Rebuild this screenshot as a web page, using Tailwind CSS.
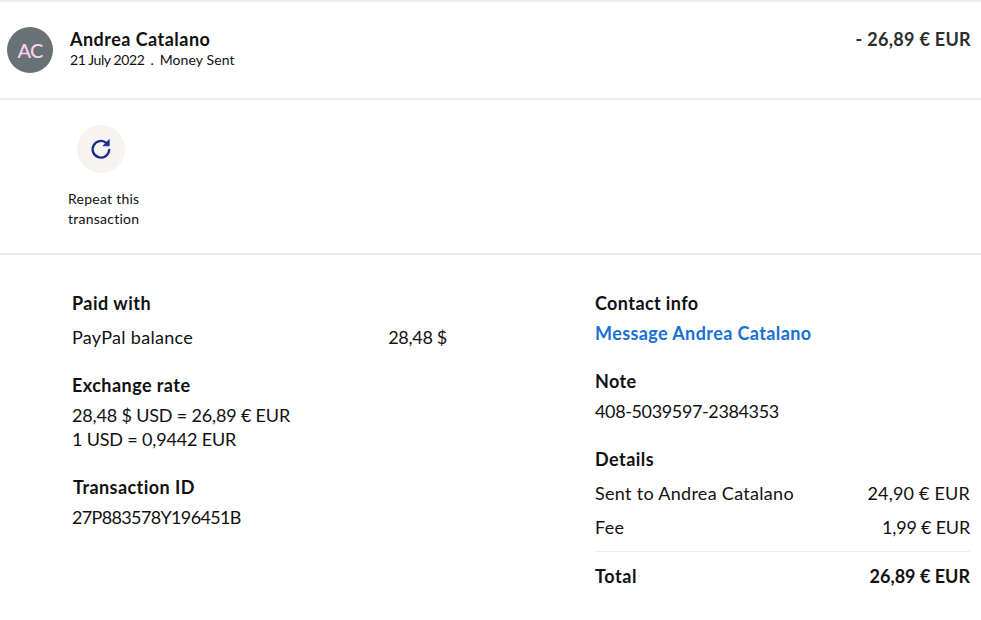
<!DOCTYPE html>
<html>
<head>
<meta charset="utf-8">
<script src="https://cdn.jsdelivr.net/npm/@tailwindcss/browser@4"></script>
</head>
<body class="bg-white">
<div class="w-[981px] h-[620px] overflow-hidden bg-white text-[#111] font-['Lato','Noto_Sans',sans-serif] text-[18px]">
  <div class="h-[100px] border-y-2 border-[#eaecef] flex items-start pl-[7px] pr-[10px] pt-[25px]">
    <div class="w-[46px] h-[46px] rounded-full bg-[#687173] flex items-center justify-center text-[#ffd0f5] text-[20px] font-medium tracking-[-0.8px]">AC</div>
    <div class="ml-[17px] flex-1">
      <div class="text-[18px] leading-[24px] font-bold tracking-[0.47px]">Andrea Catalano</div>
      <div class="text-[14px] leading-[18px]"><span class="tracking-[-0.4px]">21 July 2022</span><span class="mx-[6px]">.</span><span class="tracking-[0.1px]">Money Sent</span></div>
    </div>
    <div class="text-[18px] leading-[24px] font-bold text-[#2c2e2f] tracking-[0.3px]">- 26,89 € EUR</div>
  </div>
  <div class="h-[155px] border-b-2 border-[#eaecef] pl-[68px] pt-[25px]">
    <div class="ml-[9px] w-[48px] h-[48px] rounded-full bg-[#f5f4f0] flex items-center justify-center">
      <svg width="24" height="24" viewBox="0 0 24 24" fill="none">
        <path d="M17.6 6.2A8.3 8.3 0 1 0 20.2 13" stroke="#1a2c8a" stroke-width="2.3" stroke-linecap="round"/>
        <path d="M20.2 2.6v6.2h-6.2z" fill="#1a2c8a" stroke="#1a2c8a" stroke-width="0.8" stroke-linejoin="round"/>
      </svg>
    </div>
    <div class="mt-[16px] text-[14px] leading-[20px] w-[90px] tracking-[0.25px]">Repeat this transaction</div>
  </div>
  <div class="flex pt-[36px]">
    <div class="w-[595px] pl-[72px]">
      <div class="font-bold leading-[24px] tracking-[0.5px]">Paid with</div>
      <div class="flex w-[375px] justify-between mt-[10px] leading-[24px]"><span class="tracking-[0.3px]">PayPal balance</span><span class="tracking-[-0.3px]">28,48 $</span></div>
      <div class="font-bold leading-[24px] mt-[24px] tracking-[0.45px]">Exchange rate</div>
      <div class="mt-[6px] leading-[24px] tracking-[-0.17px]">28,48 $ USD = 26,89 € EUR<br>1 USD = 0,9442 EUR</div>
      <div class="font-bold leading-[24px] mt-[24px] pl-[1px] tracking-[0.43px]">Transaction ID</div>
      <div class="mt-[6px] leading-[24px] tracking-[-0.65px]">27P883578Y196451B</div>
    </div>
    <div class="w-[375px]">
      <div class="font-bold leading-[24px] tracking-[0.4px]">Contact info</div>
      <div class="font-bold leading-[24px] mt-[6px] text-[#1a6fd4] tracking-[0.4px]">Message Andrea Catalano</div>
      <div class="font-bold leading-[24px] mt-[24px] tracking-[0.4px]">Note</div>
      <div class="mt-[6px] leading-[24px] tracking-[-0.37px]">408-5039597-2384353</div>
      <div class="font-bold leading-[24px] mt-[24px] tracking-[0.45px]">Details</div>
      <div class="flex justify-between mt-[10px] leading-[24px]"><span class="tracking-[0.3px]">Sent to Andrea Catalano</span><span class="tracking-[0.2px]">24,90 € EUR</span></div>
      <div class="flex justify-between mt-[10px] leading-[24px]"><span class="tracking-[0.3px]">Fee</span><span class="tracking-[-0.2px]">1,99 € EUR</span></div>
      <div class="border-t border-[#eaecef] mt-[12px] pt-[12px] flex justify-between font-bold leading-[24px]"><span class="tracking-[0.6px]">Total</span><span>26,89 € EUR</span></div>
    </div>
  </div>
</div>
</body>
</html>
